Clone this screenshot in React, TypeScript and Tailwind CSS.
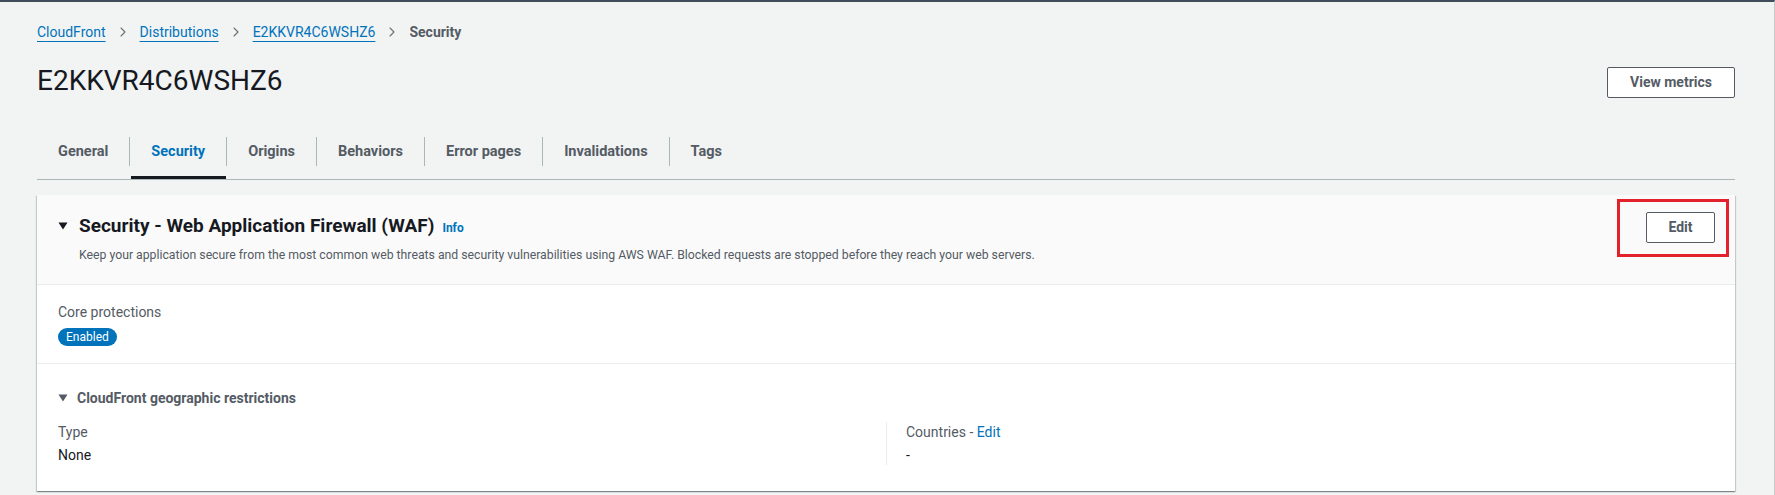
import { ChevronRight } from "lucide-react";

const tabs = ["General", "Security", "Origins", "Behaviors", "Error pages", "Invalidations", "Tags"];

function Caret({ className }: { className?: string }) {
  return (
    <svg width="10" height="8" viewBox="0 0 10 8" className={className}>
      <path d="M0.5 0.5 H9.5 L5 7.5 Z" fill="currentColor" />
    </svg>
  );
}

function Crumb({ label }: { label: string }) {
  return (
    <>
      <a className="text-[#0073bb] underline underline-offset-[4px] decoration-1">{label}</a>
      <ChevronRight className="mx-[9px] h-[16px] w-[16px] text-[#687078]" strokeWidth={1.6} />
    </>
  );
}

export default function App() {
  return (
    <div
      className="h-[495px] w-[1775px] overflow-hidden border-t-2 border-r border-t-[#414d5c] border-r-[#c6cbcd] bg-[#f2f3f3] pr-[39px] pl-[37px] text-[#16191f]"
      style={{ fontFamily: "Roboto, 'Liberation Sans', sans-serif" }}
    >
      {/* breadcrumbs */}
      <nav className="flex items-center pt-[20px] text-[14px] leading-[20px]">
        <Crumb label="CloudFront" />
        <Crumb label="Distributions" />
        <Crumb label="E2KKVR4C6WSHZ6" />
        <span className="font-bold text-[#545b64]">Security</span>
      </nav>

      {/* header */}
      <div className="mt-[21px] flex items-center justify-between">
        <h1 className="text-[28px] leading-[36px] font-normal text-[#16191f]">E2KKVR4C6WSHZ6</h1>
        <button className="mt-[2px] h-[31px] w-[128px] rounded-[2px] border border-[#545b64] bg-white text-[14px] font-bold text-[#545b64]">
          View metrics
        </button>
      </div>

      {/* tabs */}
      <div className="mt-[30px] flex border-b border-[#aab7b8]">
        {tabs.map((tab, i) => (
          <div key={tab} className="relative h-[50px] pt-[8px]">
            <div
              className={
                "flex h-[29px] items-center px-[21px] text-[14.5px] font-bold " +
                (i > 0 ? "border-l border-[#aab7b8] " : "") +
                (tab === "Security" ? "text-[#0073bb]" : "text-[#545b64]")
              }
            >
              {tab}
            </div>
            {tab === "Security" && <div className="absolute right-0 bottom-0 left-[2px] h-[3px] bg-[#16191f]" />}
          </div>
        ))}
      </div>

      {/* card */}
      <div className="relative mt-[15px] bg-white shadow-[0_1px_1px_0_rgba(0,28,36,0.3),1px_1px_1px_0_rgba(0,28,36,0.15),-1px_1px_1px_0_rgba(0,28,36,0.15)]">
        <div className="flex items-start justify-between border-b border-[#eaeded] bg-[#fafafa] pt-[20px] pr-[20px] pb-[21px] pl-[21px]">
          <div>
            <div className="flex items-center">
              <Caret className="mr-[11px] text-[#16191f]" />
              <h2 className="text-[19px] leading-[22px] font-bold text-[#16191f]">Security - Web Application Firewall (WAF)</h2>
              <a className="mt-[3px] ml-[8px] text-[12px] font-bold text-[#0073bb]">Info</a>
            </div>
            <p className="mt-[10px] pl-[21px] text-[12.25px] leading-[16px] text-[#545b64]">
              Keep your application secure from the most common web threats and security vulnerabilities using AWS WAF. Blocked requests are stopped before they reach your web servers.
            </p>
          </div>
          <button className="mt-[-3px] h-[31px] w-[69px] rounded-[2px] border border-[#545b64] bg-white text-[14px] font-bold text-[#545b64]">
            Edit
          </button>
        </div>

        {/* annotation highlight */}
        <div className="absolute top-[4px] right-[6px] h-[58px] w-[112px] border-[3px] border-[#e3202b]" />

        <div className="border-b border-[#eaeded] px-[21px] pt-[17px] pb-[15px]">
          <div className="text-[14px] leading-[20px] text-[#545b64]">Core protections</div>
          <span className="mt-[6px] inline-flex h-[18px] items-center rounded-full bg-[#0073bb] px-[8px] text-[12px] text-white">
            Enabled
          </span>
        </div>

        <div className="px-[21px] pt-[24px] pb-[26px]">
          <div className="flex items-center">
            <Caret className="mr-[9px] text-[#545b64]" />
            <span className="text-[14px] leading-[20px] font-bold text-[#545b64]">CloudFront geographic restrictions</span>
          </div>
          <div className="mt-[14px] grid grid-cols-2">
            <div>
              <div className="text-[14px] leading-[20px] text-[#545b64]">Type</div>
              <div className="mt-[3px] text-[14px] leading-[20px] text-[#16191f]">None</div>
            </div>
            <div className="border-l border-[#eaeded] pl-[19px]">
              <div className="text-[14px] leading-[20px] text-[#545b64]">
                Countries - <a className="text-[#0073bb]">Edit</a>
              </div>
              <div className="mt-[3px] text-[14px] leading-[20px] text-[#16191f]">-</div>
            </div>
          </div>
        </div>
      </div>
    </div>
  );
}
